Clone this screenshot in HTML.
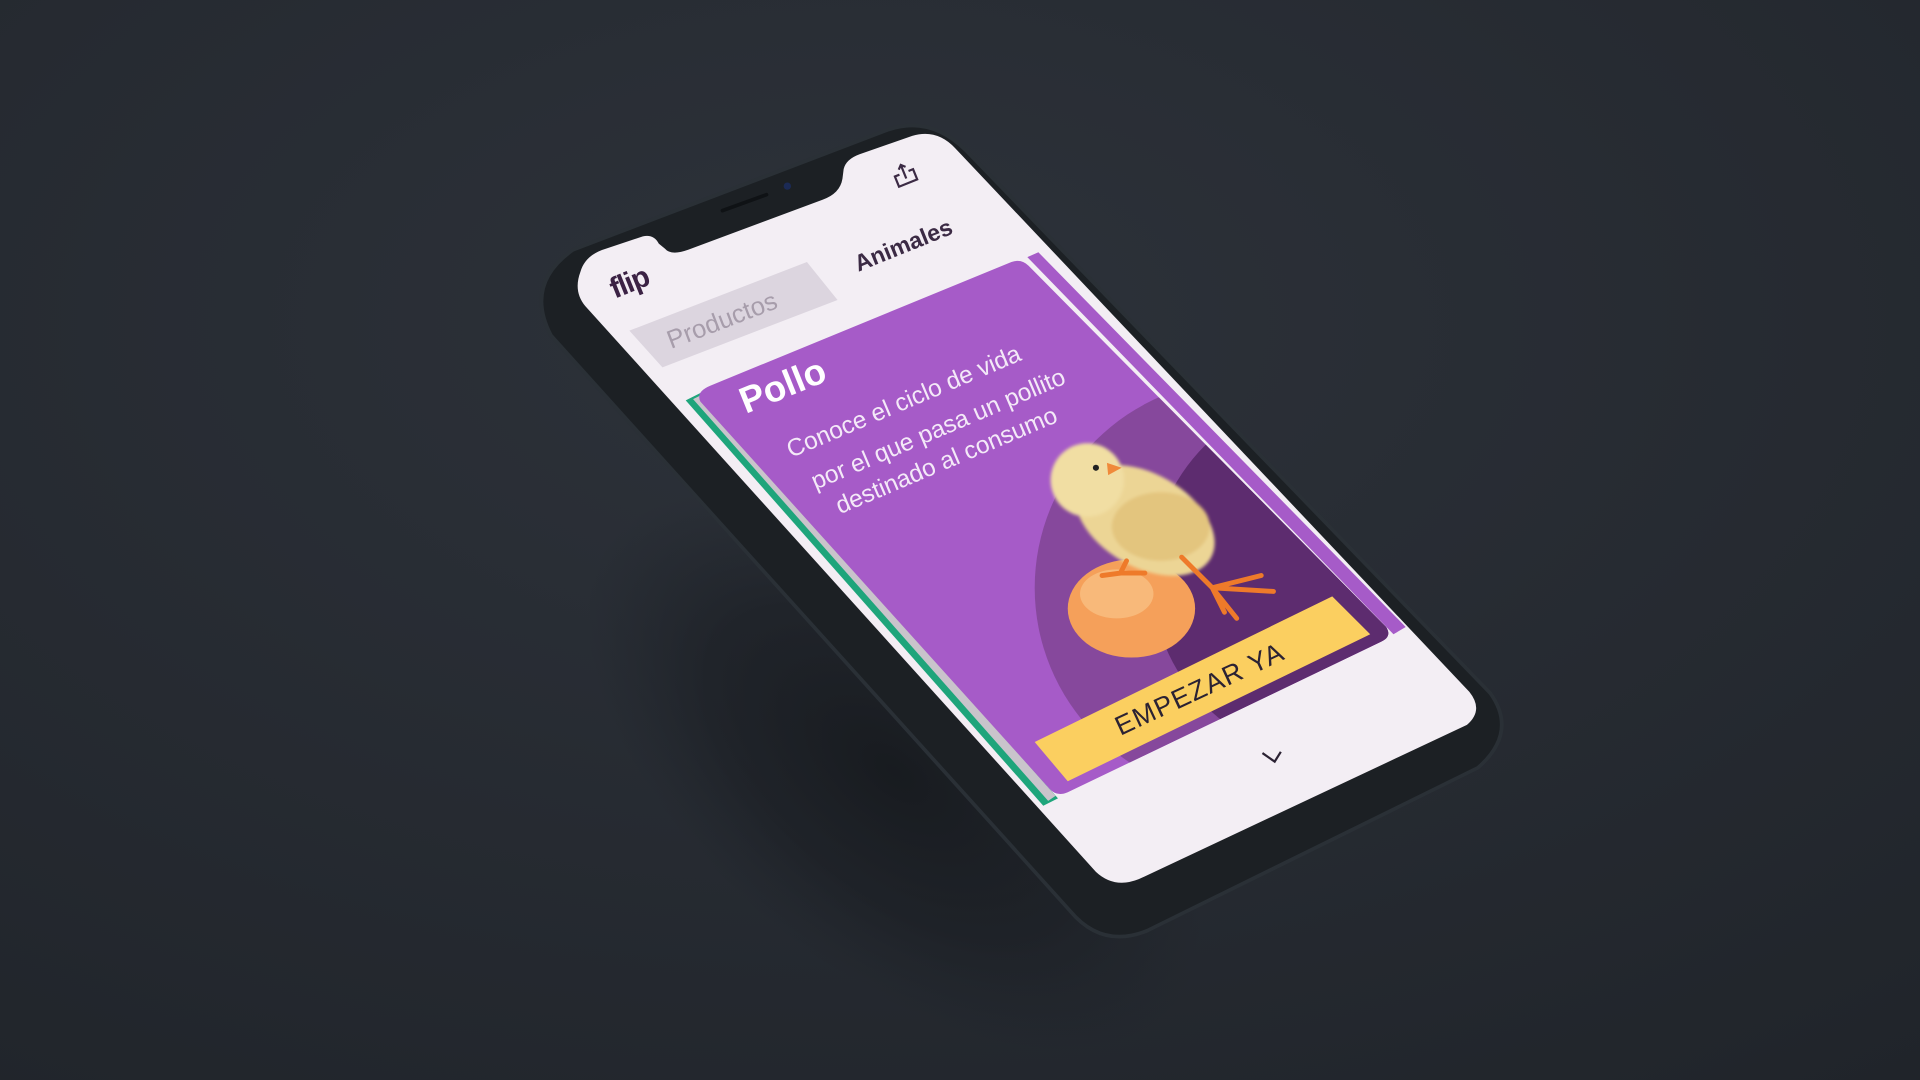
<!DOCTYPE html>
<html><head><meta charset="utf-8"><style>
html,body{margin:0;padding:0;width:1920px;height:1080px;overflow:hidden;background:#272c33}
svg{display:block;overflow:hidden;width:1920px;height:1080px}
text{font-family:"Liberation Sans",sans-serif}
</style></head><body>
<svg width="1920" height="1080" viewBox="0 0 1568 882" overflow="hidden" xmlns="http://www.w3.org/2000/svg">
<defs>
<radialGradient id="bg" cx="0.45" cy="0.3" r="0.9">
<stop offset="0" stop-color="#2d323a"/><stop offset="1" stop-color="#20242a"/>
</radialGradient>
<radialGradient id="sh" cx="0.5" cy="0.5" r="0.5">
<stop offset="0" stop-color="#15181c" stop-opacity="0.85"/>
<stop offset="0.6" stop-color="#181b20" stop-opacity="0.5"/>
<stop offset="1" stop-color="#1c2026" stop-opacity="0"/>
</radialGradient>
<filter id="b2"><feGaussianBlur stdDeviation="1.2"/></filter>
<clipPath id="card"><path d="M580,315 L826,214 Q834,211 840,217 L1132,512 Q1137,520 1128,524 L872,647 Q863,651 857,644 L572,328 Q568,320 580,315 Z"/></clipPath>
</defs>
<rect width="1568" height="882" fill="url(#bg)"/>
<ellipse cx="730" cy="630" rx="300" ry="160" fill="url(#sh)" transform="rotate(40 730 630)"/>
<path d="M468,204 L725,106 Q760,94 789,123 L1217,566 Q1240,598 1207,627 L937,760 Q900,775 874,744 L450,274 Q428,232 468,204 Z" fill="#1c2024" stroke="#2a3036" stroke-width="3"/>
<path d="M474,222 Q478,208 495,203 L525,193 Q534,191 538,199 L543,203 Q548,209 562,204 L672,163 Q686,158 688,146 L689,138 Q691,130 702,126 L745,111 Q765,105 780,121 L1200,565 Q1212,580 1198,592 L930,718 Q910,726 895,712 L478,250 Q468,238 474,222 Z" fill="#f3eef4"/>
<line x1="590" y1="172" x2="626" y2="159" stroke="#0f1215" stroke-width="3" stroke-linecap="round"/>
<circle cx="643" cy="152" r="3" fill="#1b2a55"/>
<g transform="translate(739,143) rotate(-22)" fill="none" stroke="#3b2a44" stroke-width="1.8">
<path d="M-4,-2 L-8,-2 L-8,7 L8,7 L8,-2 L4,-2"/><path d="M0,3 L0,-9 M-3,-6 L0,-9 L3,-6"/>
</g>
<text transform="translate(502,244) rotate(-22)" font-size="24" font-weight="bold" fill="#3b2244" letter-spacing="-1">flip</text>
<path d="M514,270 L659,214 L684,245 L541,300 Z" fill="#dcd5df"/>
<text transform="translate(548,285) rotate(-21)" font-size="21" fill="#a79dab">Productos</text>
<text transform="translate(701,222) rotate(-22)" font-size="19" font-weight="bold" fill="#3b2a44">Animales</text>
<path d="M560,327 L572,321 L864,652 L852,658 Z" fill="#1ea57b"/>
<path d="M566,326 L574,322 L862,650 L856,654 Z" fill="#c9c4cb"/>
<path d="M839,210 L848,206 L1148,512 L1138,518 Z" fill="#a65bc8"/>
<path d="M580,315 L826,214 Q834,211 840,217 L1132,512 Q1137,520 1128,524 L872,647 Q863,651 857,644 L572,328 Q568,320 580,315 Z" fill="#a65bc8"/>
<g clip-path="url(#card)">
<circle cx="1015" cy="480" r="170" fill="#86489c"/>
<circle cx="1090" cy="470" r="150" fill="#5d2c6f"/>
<ellipse cx="924" cy="497" rx="52" ry="40" fill="#f5a05a"/>
<ellipse cx="912" cy="485" rx="30" ry="20" fill="#f8b97a"/>
<g filter="url(#b2)">
<ellipse cx="935" cy="425" rx="62" ry="38" fill="#ecd595" transform="rotate(30 935 425)"/>
<ellipse cx="888" cy="392" rx="30" ry="30" fill="#f1dea3"/>
<ellipse cx="948" cy="430" rx="40" ry="28" fill="#e3c57e"/>
</g>
<circle cx="895" cy="382" r="2.5" fill="#222"/>
<path d="M904,378 L916,382 L905,388 Z" fill="#f08a3a"/>
<path d="M965,455 L990,480 L1000,500 M990,480 L1040,483 M990,480 L1030,470 M990,480 L1010,505" stroke="#ee7a2a" stroke-width="4" fill="none" stroke-linecap="round"/>
<path d="M920,458 L915,468 L900,470 M915,468 L935,468" stroke="#ee7a2a" stroke-width="4" fill="none" stroke-linecap="round"/>
<path d="M845,606 L1088,487 L1119,518 L872,638 Z" fill="#fbcf60"/>
</g>
<text transform="translate(609,338) rotate(-22)" font-size="30" font-weight="bold" fill="#ffffff">Pollo</text>
<text transform="translate(646,374) rotate(-23)" font-size="20" fill="#f4e9f8">Conoce el ciclo de vida</text>
<text transform="translate(666,400) rotate(-23)" font-size="20" fill="#f4e9f8">por el que pasa un pollito</text>
<text transform="translate(686,420) rotate(-23)" font-size="20" fill="#f4e9f8">destinado al consumo</text>
<text transform="translate(915,601) rotate(-25)" font-size="22" fill="#2b2233" letter-spacing="1">EMPEZAR YA</text>
<path d="M1031,615 L1041,622 L1046,614" stroke="#2b2233" stroke-width="1.8" fill="none"/>
</svg>
</body></html>
